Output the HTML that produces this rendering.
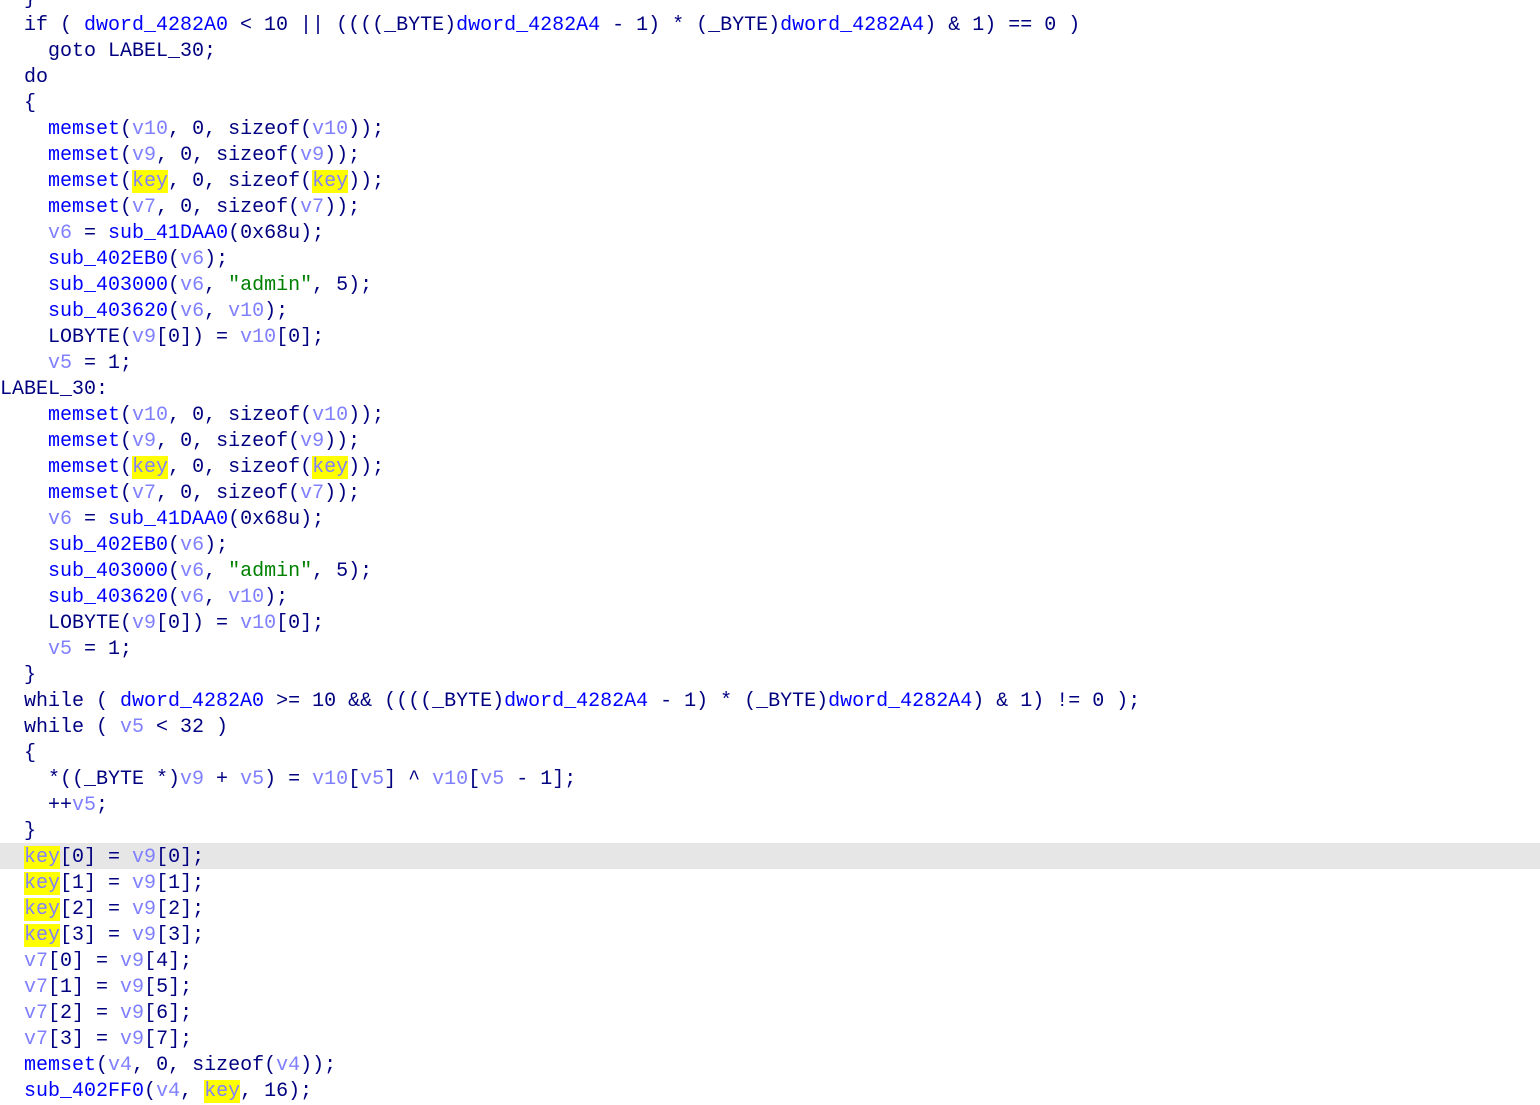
<!DOCTYPE html>
<html><head><meta charset="utf-8"><style>
html,body{margin:0;padding:0;background:#fff;width:1540px;height:1083px;overflow:hidden}
#c{position:absolute;left:0;top:-15px;width:1540px;font-family:"Liberation Mono",monospace;font-size:20px;color:#000080}
.l{height:24px;padding-top:2px;line-height:26px;white-space:pre}
.cur{background:#e6e6e6}
.f{color:#0000ff}.v{color:#8080ff}.s{color:#008000}.h{background:#ffff00}
</style></head><body><div id="c">
<div class="l">  }</div>
<div class="l">  if ( <span class="f">dword_4282A0</span> &lt; 10 || ((((_BYTE)<span class="f">dword_4282A4</span> - 1) * (_BYTE)<span class="f">dword_4282A4</span>) &amp; 1) == 0 )</div>
<div class="l">    goto LABEL_30;</div>
<div class="l">  do</div>
<div class="l">  {</div>
<div class="l">    <span class="f">memset</span>(<span class="v">v10</span>, 0, sizeof(<span class="v">v10</span>));</div>
<div class="l">    <span class="f">memset</span>(<span class="v">v9</span>, 0, sizeof(<span class="v">v9</span>));</div>
<div class="l">    <span class="f">memset</span>(<span class="v h">key</span>, 0, sizeof(<span class="v h">key</span>));</div>
<div class="l">    <span class="f">memset</span>(<span class="v">v7</span>, 0, sizeof(<span class="v">v7</span>));</div>
<div class="l">    <span class="v">v6</span> = <span class="f">sub_41DAA0</span>(0x68u);</div>
<div class="l">    <span class="f">sub_402EB0</span>(<span class="v">v6</span>);</div>
<div class="l">    <span class="f">sub_403000</span>(<span class="v">v6</span>, <span class="s">"admin"</span>, 5);</div>
<div class="l">    <span class="f">sub_403620</span>(<span class="v">v6</span>, <span class="v">v10</span>);</div>
<div class="l">    LOBYTE(<span class="v">v9</span>[0]) = <span class="v">v10</span>[0];</div>
<div class="l">    <span class="v">v5</span> = 1;</div>
<div class="l">LABEL_30:</div>
<div class="l">    <span class="f">memset</span>(<span class="v">v10</span>, 0, sizeof(<span class="v">v10</span>));</div>
<div class="l">    <span class="f">memset</span>(<span class="v">v9</span>, 0, sizeof(<span class="v">v9</span>));</div>
<div class="l">    <span class="f">memset</span>(<span class="v h">key</span>, 0, sizeof(<span class="v h">key</span>));</div>
<div class="l">    <span class="f">memset</span>(<span class="v">v7</span>, 0, sizeof(<span class="v">v7</span>));</div>
<div class="l">    <span class="v">v6</span> = <span class="f">sub_41DAA0</span>(0x68u);</div>
<div class="l">    <span class="f">sub_402EB0</span>(<span class="v">v6</span>);</div>
<div class="l">    <span class="f">sub_403000</span>(<span class="v">v6</span>, <span class="s">"admin"</span>, 5);</div>
<div class="l">    <span class="f">sub_403620</span>(<span class="v">v6</span>, <span class="v">v10</span>);</div>
<div class="l">    LOBYTE(<span class="v">v9</span>[0]) = <span class="v">v10</span>[0];</div>
<div class="l">    <span class="v">v5</span> = 1;</div>
<div class="l">  }</div>
<div class="l">  while ( <span class="f">dword_4282A0</span> &gt;= 10 &amp;&amp; ((((_BYTE)<span class="f">dword_4282A4</span> - 1) * (_BYTE)<span class="f">dword_4282A4</span>) &amp; 1) != 0 );</div>
<div class="l">  while ( <span class="v">v5</span> &lt; 32 )</div>
<div class="l">  {</div>
<div class="l">    *((_BYTE *)<span class="v">v9</span> + <span class="v">v5</span>) = <span class="v">v10</span>[<span class="v">v5</span>] ^ <span class="v">v10</span>[<span class="v">v5</span> - 1];</div>
<div class="l">    ++<span class="v">v5</span>;</div>
<div class="l">  }</div>
<div class="l cur">  <span class="v h">key</span>[0] = <span class="v">v9</span>[0];</div>
<div class="l">  <span class="v h">key</span>[1] = <span class="v">v9</span>[1];</div>
<div class="l">  <span class="v h">key</span>[2] = <span class="v">v9</span>[2];</div>
<div class="l">  <span class="v h">key</span>[3] = <span class="v">v9</span>[3];</div>
<div class="l">  <span class="v">v7</span>[0] = <span class="v">v9</span>[4];</div>
<div class="l">  <span class="v">v7</span>[1] = <span class="v">v9</span>[5];</div>
<div class="l">  <span class="v">v7</span>[2] = <span class="v">v9</span>[6];</div>
<div class="l">  <span class="v">v7</span>[3] = <span class="v">v9</span>[7];</div>
<div class="l">  <span class="f">memset</span>(<span class="v">v4</span>, 0, sizeof(<span class="v">v4</span>));</div>
<div class="l">  <span class="f">sub_402FF0</span>(<span class="v">v4</span>, <span class="v h">key</span>, 16);</div>
</div></body></html>
